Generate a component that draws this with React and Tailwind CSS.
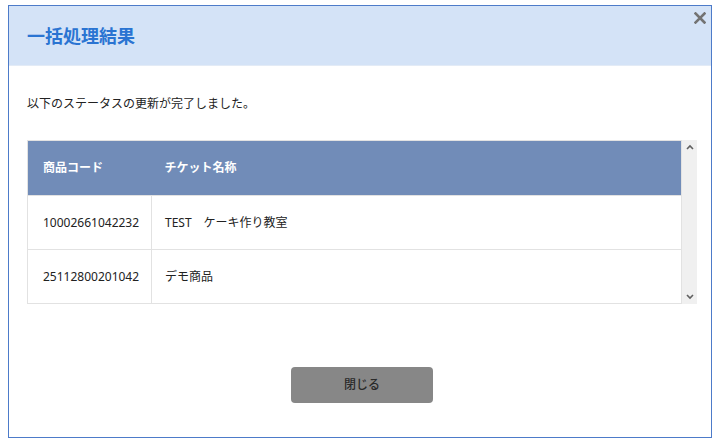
const rows = [
  { code: '10002661042232', name: 'TEST\u3000ケーキ作り教室' },
  { code: '25112800201042', name: 'デモ商品' },
]

export default function App() {
  return (
    <div className="w-[717px] h-[445px] bg-white pt-[5px] pl-[8px] font-['Noto_Sans','Noto_Sans_CJK_JP',sans-serif]">
      <div className="w-[704px] h-[433px] border border-[#4d7bc9] flex flex-col bg-white">

        {/* ── Header ── */}
        <div className="relative h-[60px] flex-shrink-0 bg-[#d4e3f7] border-b border-[#e3ebf6] flex items-center pl-[18px]">
          <h1 className="text-[18px] font-bold text-[#2a74d2] leading-none">一括処理結果</h1>
          <button className="absolute right-[5px] top-[6px] text-[#737373]" aria-label="close">
            <svg viewBox="0 0 12 12" className="w-[12px] h-[12px]" stroke="currentColor" strokeWidth="2.6" strokeLinecap="square">
              <path d="M1.5 1.5l9 9M10.5 1.5l-9 9" />
            </svg>
          </button>
        </div>

        {/* ── Body ── */}
        <div className="flex-1 flex flex-col pl-[18px] pr-[14px]">
          <p className="mt-[29px] text-[12px] text-[#222] leading-[18px]">以下のステータスの更新が完了しました。</p>

          <div className="mt-[27px] flex h-[164px]">
            <table className="flex-1 border-collapse text-[12px] text-[#222] border border-[#e2e2e2]">
              <thead>
                <tr className="bg-[#718cb8] text-white h-[55px]">
                  <th className="w-[124px] text-left font-bold pl-[15px]">商品コード</th>
                  <th className="text-left font-bold pl-[13px]">チケット名称</th>
                </tr>
              </thead>
              <tbody>
                {rows.map((r) => (
                  <tr key={r.code} className="h-[54px] border-t border-[#e2e2e2]">
                    <td className="pl-[15px] border-r border-[#e2e2e2]">{r.code}</td>
                    <td className="pl-[13px]">{r.name}</td>
                  </tr>
                ))}
              </tbody>
            </table>

            {/* scrollbar */}
            <div className="w-[15px] bg-[#f0f0f0] flex flex-col justify-between items-center py-[4px] text-[#606060]">
              <svg viewBox="0 0 8 6" className="w-[8px] h-[6px]" fill="none" stroke="currentColor" strokeWidth="1.6">
                <path d="M1 5l3-3 3 3" />
              </svg>
              <svg viewBox="0 0 8 6" className="w-[8px] h-[6px]" fill="none" stroke="currentColor" strokeWidth="1.6">
                <path d="M1 1l3 3 3-3" />
              </svg>
            </div>
          </div>

          <div className="flex justify-center mt-[63px]">
            <button className="w-[142px] h-[36px] rounded-[4px] bg-[#878787] text-[12px] text-[#2a2a2a] font-medium">
              閉じる
            </button>
          </div>
        </div>

      </div>
    </div>
  )
}
